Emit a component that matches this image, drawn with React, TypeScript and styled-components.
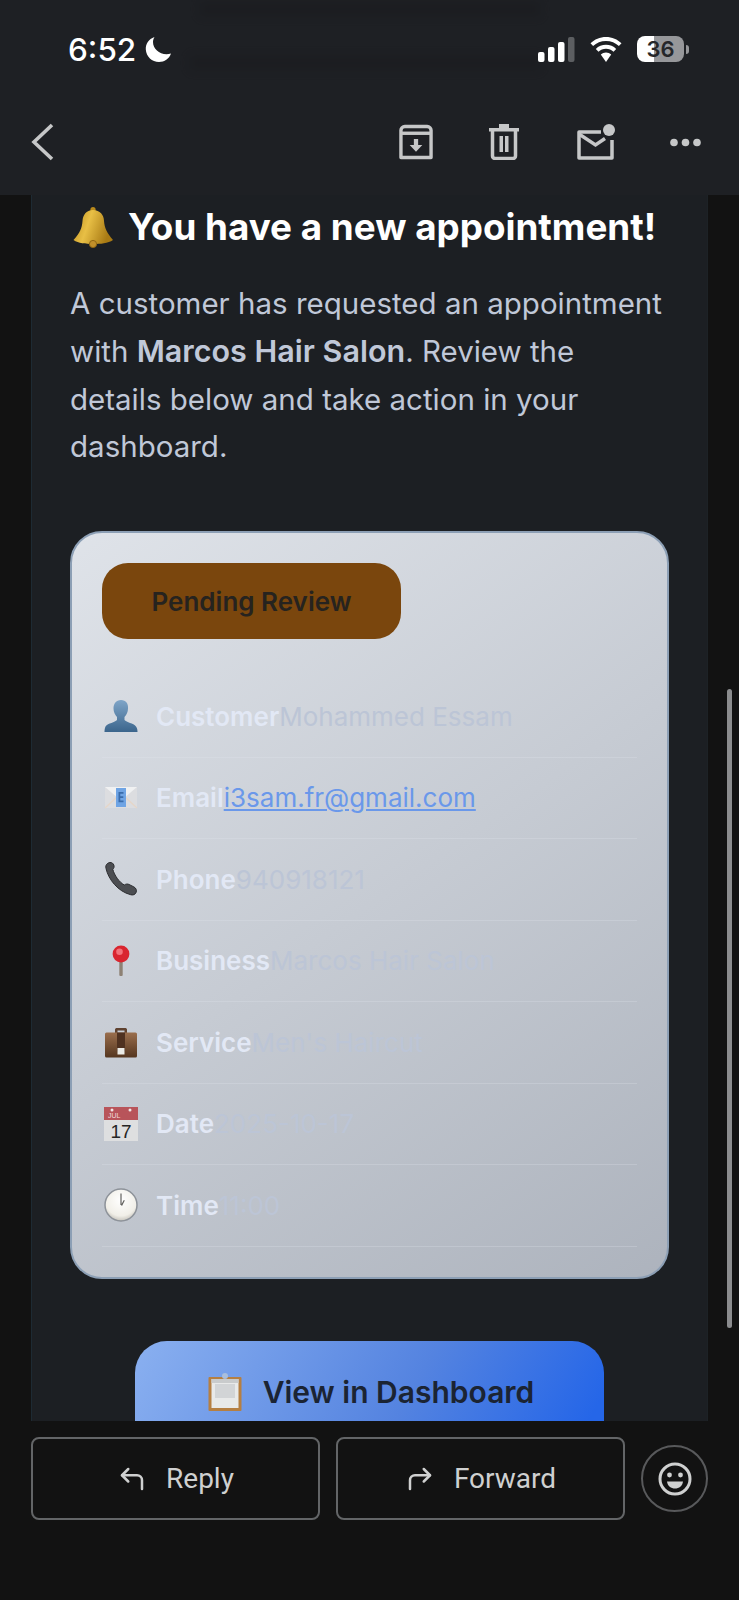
import React from "react";
import styled, { createGlobalStyle } from "styled-components";
import { CornerUpLeft, CornerUpRight } from "lucide-react";

const GlobalStyle = createGlobalStyle`
  html, body {
    margin: 0;
    padding: 0;
    background: #121212;
  }
  * {
    box-sizing: border-box;
  }
`;

const BellEmoji = () => (
  <svg width="42" height="42" viewBox="0 0 42 42">
    <defs>
      <linearGradient id="bellGold" x1="0" y1="0" x2="1" y2="0.3">
        <stop offset="0" stopColor="#b98a1c" />
        <stop offset="0.45" stopColor="#e8bf45" />
        <stop offset="1" stopColor="#a87a14" />
      </linearGradient>
    </defs>
    <circle cx="21" cy="3.5" r="2.6" fill="#b98a1c" />
    <path d="M21 4c-7 0-10 5-10.500 11-.5 7-2.500 12-9 19 5 3.500 12 4 19.500 4s15-.5 20-4c-6-7-8.500-12-9-19C32 9 28 4 21 4z" fill="url(#bellGold)" />
    <circle cx="21" cy="38" r="3.600" fill="#c08f2a" stroke="#8e6612" strokeWidth="1" />
  </svg>
);

const BustEmoji = () => (
  <svg width="34" height="34" viewBox="0 0 34 34">
    <defs>
      <linearGradient id="bust" x1="0" y1="0" x2="0" y2="1">
        <stop offset="0" stopColor="#7fa5c8" />
        <stop offset="1" stopColor="#3b658c" />
      </linearGradient>
    </defs>
    <path d="M17 1c-5 0-7.500 4-7.500 8.500 0 3.500 1.500 6.500 3.500 8.500v3c-2 2.500-9 3-11.500 6.500C.8 29 .5 31 .5 33h33c0-2-.3-4-1.500-5.500-2.500-3.500-9.500-4-11.500-6.500v-3c2-2 3.500-5 3.500-8.500C24.500 5 22 1 17 1z" fill="url(#bust)" />
  </svg>
);

const EnvelopeEmoji = () => (
  <svg width="34" height="24" viewBox="0 0 34 24">
    <rect x="1" y="1" width="32" height="21" fill="#dcdde0" />
    <path d="M1 1h32L20 12h-6z" fill="#f0f1f2" />
    <path d="M1 22l12-11M33 22L21 11" stroke="#e6d6c8" strokeWidth="1.200" fill="none" />
    <rect x="12" y="2" width="10" height="19" fill="#6fa4e4" />
    <path d="M14.500 6h5v1.800h-3.200v2.400h3v1.800h-3v2.400h3.200v1.800h-5z" fill="#3a6cab" />
  </svg>
);

const PhoneEmoji = () => (
  <svg width="34" height="34" viewBox="0 0 34 34">
    <path d="M2 6.500C1 3 3.500.8 6 .5c2-.2 3.200 1 3.800 2.500.7 1.700.2 3.200-1 4.300 1.500 6 6.500 13 11.500 15.700 1.500-1 3-1.300 4.600-.6l5 2.500c2.300 1.200 3 3.500 2.200 5.500-.9 2.300-3.500 3-5.500 2.300C14 29.500 4.500 17.500 2 6.500z" fill="#4c4e52" stroke="#2c2d30" strokeWidth="1" />
  </svg>
);

const PinEmoji = () => (
  <svg width="34" height="31" viewBox="0 0 34 31">
    <rect x="15.300" y="15" width="3.400" height="16" rx="1" fill="#8d8174" />
    <circle cx="17" cy="9" r="8.400" fill="#d9252f" />
    <circle cx="15.500" cy="6.800" r="3.300" fill="#f2727a" />
  </svg>
);

const BriefcaseEmoji = () => (
  <svg width="34" height="31" viewBox="0 0 34 31">
    <defs>
      <linearGradient id="caseBrown" x1="0" y1="0" x2="0" y2="1">
        <stop offset="0" stopColor="#9a6e4d" />
        <stop offset="1" stopColor="#55361f" />
      </linearGradient>
    </defs>
    <path d="M11 6V2.500C11 1.500 12 1 13 1h8c1 0 2 .5 2 1.500V6h-2.500V3.500h-7V6z" fill="#5f4230" />
    <rect x="1" y="5.500" width="32" height="25" rx="1.500" fill="url(#caseBrown)" />
    <rect x="13" y="5.500" width="8" height="19" fill="#4f3120" />
    <rect x="13.500" y="21" width="7" height="6.500" fill="#ecebe6" />
  </svg>
);

const CalendarEmoji = () => (
  <svg width="34" height="34" viewBox="0 0 34 34">
    <rect y="0" width="34" height="34" fill="#dedfe0" />
    <rect y="0" width="34" height="13" fill="#b8545a" />
    <circle cx="8" cy="3" r="1.500" fill="#f0e6e6" />
    <circle cx="26" cy="3" r="1.500" fill="#f0e6e6" />
    <text x="4" y="11" fontFamily="Liberation Sans, sans-serif" fontSize="7" fill="#f0dcdc">JUL</text>
    <text x="17" y="31" textAnchor="middle" fontFamily="Liberation Sans, sans-serif" fontSize="19" fill="#262626">17</text>
  </svg>
);

const ClockEmoji = () => (
  <svg width="34" height="34" viewBox="0 0 34 34">
    <defs>
      <radialGradient id="clockFace" cx="0.5" cy="0.35" r="0.7">
        <stop offset="0" stopColor="#ffffff" />
        <stop offset="0.7" stopColor="#f1efe8" />
        <stop offset="1" stopColor="#b9b6ae" />
      </radialGradient>
    </defs>
    <circle cx="17" cy="17" r="16" fill="url(#clockFace)" stroke="#8d9299" strokeWidth="1.500" />
    <path d="M16.400 5.500h1.200v11.500h-1.200zM17 17l2.800-5 1 .5-2.800 5.500z" fill="#63625f" />
  </svg>
);

const ClipboardEmoji = () => (
  <svg width="34" height="38" viewBox="0 0 34 38">
    <rect x="0.500" y="4" width="33" height="34" rx="1" fill="#b57f42" />
    <rect x="3.500" y="6" width="27" height="29" fill="#e8e9e9" />
    <rect x="7" y="11" width="20" height="14" fill="#d2d4d6" />
    <rect x="3.500" y="6" width="27" height="4" fill="#c9cbcc" />
    <circle cx="17" cy="3" r="3" fill="#a9bedc" />
  </svg>
);

const MoonIcon = () => (
  <svg width="27" height="27" viewBox="0 0 27 27">
    <path d="M9.500 1C3.500 3 .5 8 .8 13.500 1.200 20.500 7 26 14 26c5.500 0 10-3 12-8.500-1.500.6-3 .8-4.500.8C14 18.300 8 12.500 8 6c0-1.800.5-3.500 1.500-5z" fill="#fff" />
  </svg>
);

const SignalIcon = () => (
  <svg width="37" height="25" viewBox="0 0 37 25">
    <rect x="0" y="15" width="6.500" height="10" rx="2" fill="#fff" />
    <rect x="10" y="10" width="6.500" height="15" rx="2" fill="#fff" />
    <rect x="20" y="5" width="6.500" height="20" rx="2" fill="#fff" />
    <rect x="30" y="0" width="6.500" height="25" rx="2" fill="#5c5e61" />
  </svg>
);

const WifiIcon = () => (
  <svg width="32" height="25" viewBox="0 0 32 25">
    <path d="M16 0C10 0 4.500 2.300.5 6.300l2.600 2.800C6.500 5.800 11 3.900 16 3.900s9.500 1.900 12.900 5.200l2.600-2.800C27.500 2.300 22 0 16 0z" fill="#fff" />
    <path d="M16 7.800c-3.900 0-7.500 1.500-10.200 4.100l2.700 2.900c2-1.900 4.600-3 7.500-3s5.500 1.100 7.500 3l2.700-2.900C23.500 9.300 19.900 7.800 16 7.800z" fill="#fff" />
    <path d="M16 15.500c-2 0-3.800.8-5.200 2.100L16 25l5.200-7.400c-1.400-1.300-3.200-2.100-5.200-2.100z" fill="#fff" />
  </svg>
);

const BackIcon = () => (
  <svg width="23" height="38" viewBox="0 0 23 38">
    <path d="M21 2L3 19l18 17" fill="none" stroke="#c6c7c8" strokeWidth="3.600" />
  </svg>
);

const ArchiveIcon = () => (
  <svg width="34" height="36" viewBox="0 0 35 36">
    <path d="M2 9V6a4 4 0 0 1 4-4h23a4 4 0 0 1 4 4v28H2z" fill="none" stroke="#c6c7c8" strokeWidth="3.500" strokeLinejoin="round" />
    <path d="M2 9h31" stroke="#c6c7c8" strokeWidth="3.500" />
    <path d="M15.300 15h4.400v6h4.300l-6.500 7-6.500-7h4.300z" fill="#c6c7c8" />
  </svg>
);

const TrashIcon = () => (
  <svg width="30" height="36" viewBox="0 0 30 36">
    <path d="M0 4h30v3.500H0zM10 0h10v4H10z" fill="#c6c7c8" />
    <path d="M3.500 6v26a2.500 2.500 0 0 0 2.500 2.500h18a2.500 2.500 0 0 0 2.500-2.500V6" fill="none" stroke="#c6c7c8" strokeWidth="3.500" />
    <path d="M10.500 12h3.500v16h-3.500zM16 12h3.500v16H16z" fill="#c6c7c8" />
  </svg>
);

const MailDotIcon = () => (
  <svg width="39" height="36" viewBox="0 0 39 36">
    <path d="M24 8H2v26h33V16" fill="none" stroke="#c6c7c8" strokeWidth="3.500" strokeLinejoin="round" />
    <path d="M2 10l16.500 11L28 14.500" fill="none" stroke="#c6c7c8" strokeWidth="3.500" />
    <circle cx="32" cy="6" r="6" fill="#c6c7c8" />
  </svg>
);

const DotsIcon = () => (
  <svg width="31" height="9" viewBox="0 0 31 9">
    <circle cx="4" cy="4.500" r="3.800" fill="#c6c7c8" />
    <circle cx="15.500" cy="4.500" r="3.800" fill="#c6c7c8" />
    <circle cx="27" cy="4.500" r="3.800" fill="#c6c7c8" />
  </svg>
);

const SmileIcon = () => (
  <svg width="34" height="34" viewBox="0 0 34 34">
    <circle cx="17" cy="17" r="15" fill="none" stroke="#cfd0d0" strokeWidth="3" />
    <circle cx="11.500" cy="13" r="2.400" fill="#cfd0d0" />
    <circle cx="22.500" cy="13" r="2.400" fill="#cfd0d0" />
    <path d="M9 19.500h16c-.5 4.500-4 7-8 7s-7.500-2.500-8-7z" fill="#cfd0d0" />
  </svg>
);

const rows = [
  { icon: <BustEmoji />, label: "Customer", value: "Mohammed Essam" },
  { icon: <EnvelopeEmoji />, label: "Email", value: "i3sam.fr@gmail.com", link: true },
  { icon: <PhoneEmoji />, label: "Phone", value: "940918121" },
  { icon: <PinEmoji />, label: "Business", value: "Marcos Hair Salon" },
  { icon: <BriefcaseEmoji />, label: "Service", value: "Men's Haircut" },
  { icon: <CalendarEmoji />, label: "Date", value: "2025-10-17" },
  { icon: <ClockEmoji />, label: "Time", value: "11:00" },
];

export default function App() {
  return (
    <Page>
      <GlobalStyle />
      <Header>
        <GhostLine $top={2} $left={200} $width={340} />
        <GhostLine $top={56} $left={190} $width={350} />
        <StatusBar>
          <Clock>6:52</Clock>
          <MoonIcon />
          <StatusRight>
            <SignalIcon />
            <WifiIcon />
            <Battery>
              <BatteryBody>36</BatteryBody>
              <BatteryTip />
            </Battery>
          </StatusRight>
        </StatusBar>
        <Toolbar>
          <BackIcon />
          <ToolActions>
            <ArchiveIcon />
            <TrashIcon />
            <MailDotIcon />
            <DotsIcon />
          </ToolActions>
        </Toolbar>
      </Header>

      <Content>
        <Mail>
          <Title>
            <BellEmoji />
            <span>You have a new appointment!</span>
          </Title>
          <Intro>
            A customer has requested an appointment
            <br />
            with <strong>Marcos Hair Salon</strong>. Review the
            <br />
            details below and take action in your
            <br />
            dashboard.
          </Intro>
          <Card>
            <StatusPill>Pending Review</StatusPill>
            <Rows>
              {rows.map((row) => (
                <Row key={row.label}>
                  <RowIcon>{row.icon}</RowIcon>
                  <RowLabel>{row.label}</RowLabel>
                  {row.link ? <RowLink>{row.value}</RowLink> : <RowValue>{row.value}</RowValue>}
                </Row>
              ))}
            </Rows>
          </Card>
          <DashboardButton>
            <ClipboardEmoji />
            <span>View in Dashboard</span>
          </DashboardButton>
        </Mail>
        <Scrollbar />
      </Content>

      <Footer>
        <FooterButton>
          <CornerUpLeft size={30} strokeWidth={2} />
          <span>Reply</span>
        </FooterButton>
        <FooterButton>
          <CornerUpRight size={30} strokeWidth={2} />
          <span>Forward</span>
        </FooterButton>
        <EmojiButton>
          <SmileIcon />
        </EmojiButton>
      </Footer>
    </Page>
  );
}

const Page = styled.div`
  width: 739px;
  height: 1600px;
  overflow: hidden;
  display: flex;
  flex-direction: column;
  background: #121212;
  font-family: Inter, "Liberation Sans", sans-serif;
`;

const Header = styled.header`
  position: relative;
  height: 195px;
  flex-shrink: 0;
  background: #1e2024;
  overflow: hidden;
`;

const GhostLine = styled.div<{ $top: number; $left: number; $width: number }>`
  position: absolute;
  top: ${({ $top }) => $top}px;
  left: ${({ $left }) => $left}px;
  width: ${({ $width }) => $width}px;
  height: 14px;
  background: #17181b;
  filter: blur(5px);
  opacity: 0.35;
`;

const StatusBar = styled.div`
  position: relative;
  height: 98px;
  display: flex;
  align-items: center;
  padding: 0 50px 0 68px;
  gap: 9px;
`;

const Clock = styled.span`
  color: #fff;
  font-size: 31.500px;
  font-weight: 500;
`;

const StatusRight = styled.div`
  margin-left: auto;
  display: flex;
  align-items: center;
  gap: 15px;
`;

const Battery = styled.div`
  display: flex;
  align-items: center;
  gap: 2px;
`;

const BatteryBody = styled.div`
  width: 47px;
  height: 26px;
  border-radius: 8px;
  display: flex;
  align-items: center;
  justify-content: center;
  background: linear-gradient(to right, #fff 0 36%, #96979a 36% 100%);
  color: #26272a;
  font-size: 22px;
  font-weight: 600;
`;

const BatteryTip = styled.div`
  width: 3px;
  height: 9px;
  border-radius: 0 3px 3px 0;
  background: #96979a;
`;

const Toolbar = styled.div`
  position: relative;
  display: flex;
  align-items: center;
  height: 88px;
  padding: 0 38px 0 31px;
`;

const ToolActions = styled.div`
  margin-left: auto;
  display: flex;
  align-items: center;
  gap: 56px;

  svg:nth-child(3) {
    margin: 0 -2px 0 2px;
  }
`;

const Content = styled.main`
  position: relative;
  height: 1226px;
  flex-shrink: 0;
  overflow: hidden;
`;

const Mail = styled.div`
  margin: 0 31px;
  height: 100%;
  padding: 10px 38px 0;
  overflow: hidden;
  background: #1c1f23;
  border-left: 1px solid #1d2a33;
  border-right: 1px solid #1d2226;
`;

const Title = styled.h1`
  margin: 0;
  display: flex;
  align-items: center;
  gap: 14px;
  color: #fff;
  font-size: 36.800px;
  font-weight: 700;
  line-height: 44px;
  white-space: nowrap;

  svg {
    margin-left: 2px;
  }
`;

const Intro = styled.p`
  margin: 31px 0 0;
  color: #c0c8d8;
  font-size: 29.500px;
  line-height: 47.300px;
  white-space: nowrap;

  strong {
    font-size: 30.500px;
    font-weight: 600;
  }
`;

const Card = styled.section`
  margin-top: 61px;
  width: 599px;
  height: 748px;
  padding: 30px;
  border: 2px solid #8c9fb5;
  border-radius: 32px;
  background: linear-gradient(145deg, #dfe3e9 0%, #adb3bd 100%);
`;

const StatusPill = styled.div`
  width: 299px;
  height: 76px;
  border-radius: 26px;
  display: flex;
  align-items: center;
  justify-content: center;
  background: #7a460d;
  color: #26231f;
  font-size: 26px;
  font-weight: 600;
`;

const Rows = styled.div`
  margin-top: 37px;
`;

const Row = styled.div`
  height: 81.500px;
  display: flex;
  align-items: center;
  border-bottom: 1px solid rgba(226, 232, 240, 0.25);
  font-size: 26px;
`;

const RowIcon = styled.span`
  width: 54px;
  padding-left: 2px;
  flex-shrink: 0;
  display: flex;
  align-items: center;
  justify-content: flex-start;
`;

const RowLabel = styled.span`
  color: #e2e8f5;
  font-weight: 600;
`;

const RowValue = styled.span`
  color: #bcc5d6;
`;

const RowLink = styled.span`
  color: #6a98ea;
  text-decoration: underline;
`;

const DashboardButton = styled.div`
  margin: 62px auto 0;
  width: 469px;
  height: 150px;
  padding: 0 0 48px 3px;
  border-radius: 32px;
  display: flex;
  align-items: center;
  justify-content: center;
  gap: 21px;
  background: linear-gradient(120deg, #8ab0f0 0%, #5483e0 55%, #2566e8 90%);
  color: #1b2433;
  font-size: 30px;
  font-weight: 600;
`;

const Scrollbar = styled.div`
  position: absolute;
  top: 494px;
  right: 7px;
  width: 5px;
  height: 639px;
  border-radius: 3px;
  background: #8b8c8e;
`;

const Footer = styled.footer`
  flex: 1;
  display: grid;
  grid-template-columns: 289px 289px 67px;
  column-gap: 16px;
  align-items: center;
  align-content: start;
  padding: 16px 31px 0;
  background: #121212;
`;

const FooterButton = styled.div`
  height: 83px;
  border: 2px solid #636567;
  border-radius: 8px;
  display: flex;
  align-items: center;
  justify-content: center;
  gap: 19px;
  color: #cfd0d0;
  font-family: Roboto, sans-serif;
  font-size: 28px;
`;

const EmojiButton = styled.div`
  width: 67px;
  height: 67px;
  border: 2px solid #58595b;
  border-radius: 50%;
  display: flex;
  align-items: center;
  justify-content: center;
`;
